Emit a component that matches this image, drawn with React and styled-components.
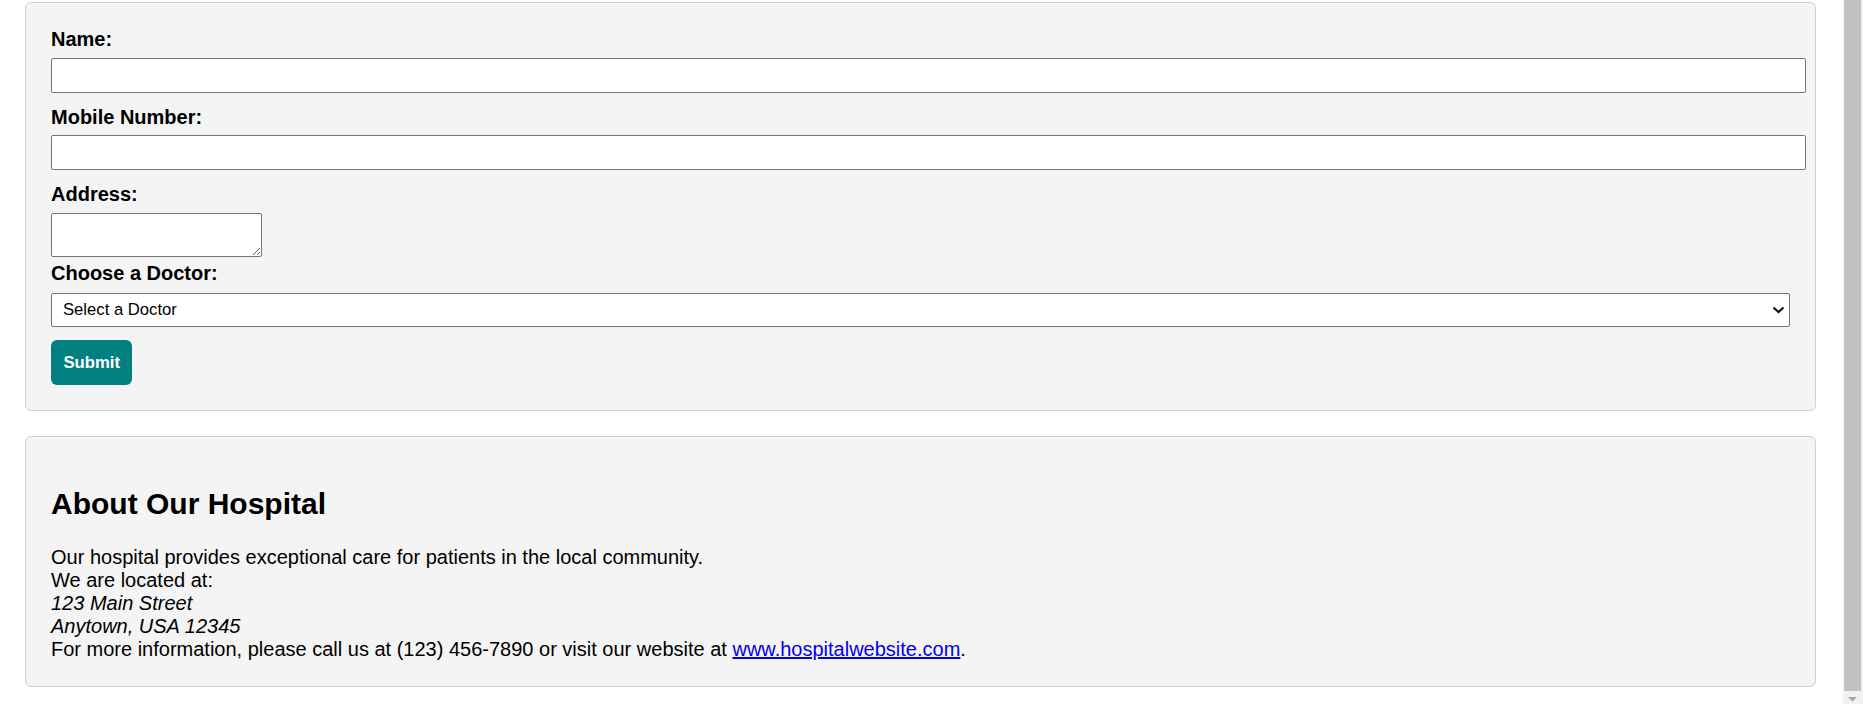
import React from 'react';
import styled, { createGlobalStyle } from 'styled-components';

const GlobalStyle = createGlobalStyle`
  body {
    margin: 0;
    background: #fff;
    color: #000;
    font-family: "Liberation Sans", Arial, sans-serif;
  }
`;

const Shell = styled.div`
  display: flex;
  height: 100vh;
  overflow: hidden;
`;

const Page = styled.main`
  flex: 1;
  min-width: 0;
  padding: 2px 27px 31px 25px;
`;

const ScrollTrack = styled.div`
  display: flex;
  flex-direction: column;
  width: 20px;
  flex-shrink: 0;
  background: #f1f1f1;
  padding: 0 2px 0 1px;
  box-sizing: border-box;
`;

const ScrollThumb = styled.div`
  flex: 1;
  background: #c1c1c1;
`;

const ScrollArrow = styled.div`
  height: 13px;
  display: flex;
  justify-content: center;
  align-items: flex-end;
  padding-bottom: 2px;
  box-sizing: border-box;
`;

const Card = styled.section`
  background: #f4f4f4;
  border: 1px solid #d0d0d0;
  border-radius: 6px;
  padding: 25px;
  margin-bottom: ${p => p.$gap || 0}px;
`;

const Label = styled.label`
  display: block;
  font-size: 20px;
  font-weight: bold;
  line-height: 23px;
  margin-bottom: ${p => p.$gap}px;
`;

const TextInput = styled.input`
  display: block;
  box-sizing: content-box;
  width: 100%;
  height: 33px;
  padding: 0 7px;
  margin: 0 0 13px;
  border: 1px solid #767676;
  border-radius: 2px;
  background: #fff;
  font: 16.67px "Liberation Sans", Arial, sans-serif;
`;

const TextArea = styled.textarea`
  display: block;
  box-sizing: border-box;
  width: 211px;
  height: 44px;
  margin: 0 0 5px;
  border: 1px solid #767676;
  border-radius: 2px;
  background: #fff;
  font: 16.67px "Liberation Mono", monospace;
`;

const SelectWrap = styled.div`
  position: relative;
  margin-bottom: 13.5px;
`;

const Select = styled.select`
  display: block;
  appearance: none;
  box-sizing: border-box;
  width: 100%;
  height: 34px;
  padding: 0 30px 0 11px;
  border: 1px solid #767676;
  border-radius: 2px;
  background: #fff;
  color: #000;
  font: 16.67px "Liberation Sans", Arial, sans-serif;
`;

const Chevron = styled.svg`
  position: absolute;
  right: 5px;
  top: 50%;
  margin-top: -4px;
  pointer-events: none;
`;

const Button = styled.button`
  display: block;
  padding: 12.5px;
  border: none;
  border-radius: 6px;
  background: #008080;
  color: #fff;
  font: bold 16.67px "Liberation Sans", Arial, sans-serif;
  line-height: 19.5px;
`;

const Heading = styled.h2`
  margin: 25px 0;
  font-size: 30px;
  line-height: 34.5px;
  font-weight: bold;
`;

const Info = styled.p`
  margin: 0;
  font-size: 20px;
  line-height: 23px;
`;

const Address = styled.address`
  font-style: italic;
`;

const Link = styled.a`
  color: #0000ee;
  text-decoration: underline;
`;

export default function App() {
  return (
    <>
      <GlobalStyle />
      <Shell>
        <Page>
          <Card as="form" $gap={25} onSubmit={e => e.preventDefault()}>
            <Label htmlFor="name" $gap={6.5}>Name:</Label>
            <TextInput id="name" type="text" />

            <Label htmlFor="mobile" $gap={6.5}>Mobile Number:</Label>
            <TextInput id="mobile" type="tel" />

            <Label htmlFor="address" $gap={6.5}>Address:</Label>
            <TextArea id="address" />

            <Label htmlFor="doctor" $gap={8}>Choose a Doctor:</Label>
            <SelectWrap>
              <Select id="doctor" defaultValue="">
                <option value="">Select a Doctor</option>
                <option value="smith">Dr. Smith</option>
                <option value="jones">Dr. Jones</option>
              </Select>
              <Chevron width="13" height="8" viewBox="0 0 13 8">
                <path d="M1.5 1.5 L6.5 6 L11.5 1.5" fill="none" stroke="#111" strokeWidth="2.2" />
              </Chevron>
            </SelectWrap>

            <Button type="submit">Submit</Button>
          </Card>

          <Card>
            <Heading>About Our Hospital</Heading>
            <Info>
              Our hospital provides exceptional care for patients in the local community.
              <br />
              We are located at:
              <Address>
                123 Main Street
                <br />
                Anytown, USA 12345
              </Address>
              For more information, please call us at (123) 456-7890 or visit our website at{' '}
              <Link href="#">www.hospitalwebsite.com</Link>.
            </Info>
          </Card>
        </Page>

        <ScrollTrack>
          <ScrollThumb />
          <ScrollArrow>
            <svg width="9" height="5" viewBox="0 0 9 5">
              <polygon points="0,0 9,0 4.5,4.5" fill="#a3a3a3" />
            </svg>
          </ScrollArrow>
        </ScrollTrack>
      </Shell>
    </>
  );
}
